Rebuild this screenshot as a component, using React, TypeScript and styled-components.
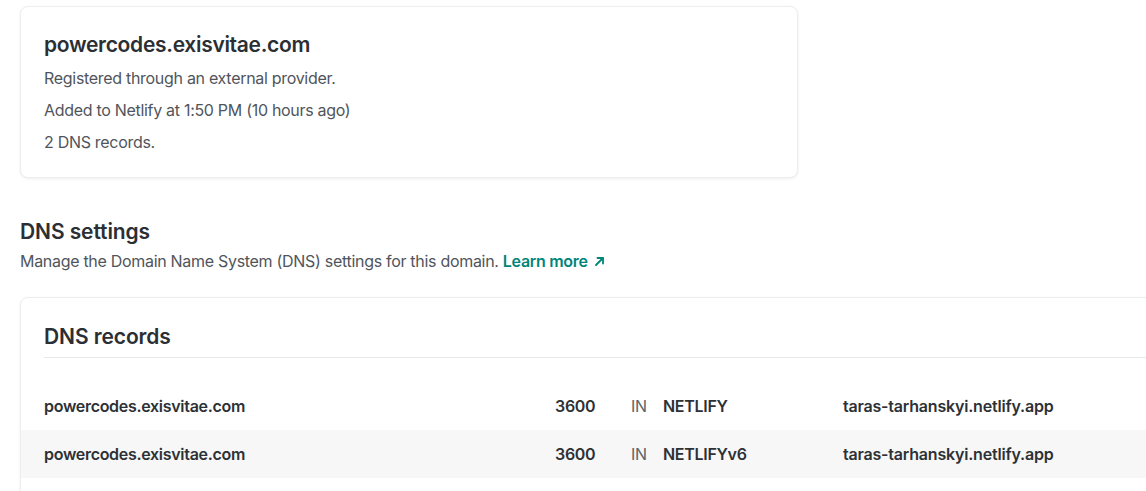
import React from "react";
import styled, { createGlobalStyle } from "styled-components";

const Global = createGlobalStyle`
  html, body { margin: 0; padding: 0; background: #ffffff; }
  body {
    font-family: Inter, "Noto Sans", "Liberation Sans", sans-serif;
    color: #50555b;
    overflow: hidden;
    letter-spacing: -0.3px;
    -webkit-font-smoothing: antialiased;
  }
`;

const Page = styled.div`
  width: 1146px;
  height: 491px;
  overflow: hidden;
  box-sizing: border-box;
  padding: 6px 0 0 20px;
`;

const Card = styled.section<{ $width: number }>`
  box-sizing: border-box;
  width: ${(p) => p.$width}px;
  background: #fff;
  border: 1px solid #eceef0;
  border-radius: 8px;
  box-shadow: 0 1px 3px rgba(0, 0, 0, 0.07);
`;

const InfoCard = styled(Card)`
  padding: 24px 23px 23px;
`;

const Heading = styled.h2`
  margin: 0;
  font-size: 21px;
  line-height: 28px;
  font-weight: 600;
  color: #2b2f34;
  letter-spacing: -0.1px;
`;

const Title = styled(Heading)`
  letter-spacing: -0.3px;
  margin-bottom: -1px;
`;

const InfoLine = styled.p`
  margin: 8px 0 0;
  font-size: 16px;
  line-height: 24px;
  color: #50555b;
`;

const Section = styled.div`
  margin-top: 40px;
`;

const SectionDesc = styled.p`
  margin: 3px 0 0;
  font-size: 16px;
  line-height: 24px;
  color: #50555b;
`;

const LearnMore = styled.a`
  color: #00857a;
  font-weight: 600;
  text-decoration: none;
  display: inline-flex;
  align-items: center;
  gap: 6px;
`;

const RecordsCard = styled(Card)`
  margin-top: 24px;
  padding: 25px 0 0;
  height: 220px;
`;

const RecordsHeader = styled.div`
  margin: 0 0 0 23px;
  padding-bottom: 6px;
  border-bottom: 1px solid #e6e8ea;
`;

const RecordList = styled.div`
  margin-top: 24px;
`;

const Row = styled.div<{ $shaded?: boolean }>`
  display: grid;
  grid-template-columns: 511px 76px 32px 180px 1fr;
  align-items: center;
  height: 48px;
  padding-left: 23px;
  background: ${(p) => (p.$shaded ? "#f7f7f7" : "transparent")};
  font-size: 16px;
  color: #2d3136;
`;

const Cell = styled.span<{ $weight?: number; $muted?: boolean; $tight?: boolean }>`
  font-weight: ${(p) => p.$weight ?? 600};
  color: ${(p) => (p.$muted ? "#5d6268" : "#2d3136")};
  letter-spacing: ${(p) => (p.$tight ? "-0.3px" : "-0.2px")};
  white-space: nowrap;
`;

const ArrowIcon = () => (
  <svg width="11" height="11" viewBox="0 0 11 11" fill="none" stroke="currentColor" strokeWidth="1.8" strokeLinecap="round" strokeLinejoin="round">
    <path d="M2 9L9 2" />
    <path d="M3.5 2H9V7.5" />
  </svg>
);

const records = [
  { name: "powercodes.exisvitae.com", ttl: "3600", cls: "IN", type: "NETLIFY", value: "taras-tarhanskyi.netlify.app" },
  { name: "powercodes.exisvitae.com", ttl: "3600", cls: "IN", type: "NETLIFYv6", value: "taras-tarhanskyi.netlify.app" },
];

export default function App() {
  return (
    <>
      <Global />
      <Page>
        <InfoCard $width={778}>
          <Title>powercodes.exisvitae.com</Title>
          <InfoLine>Registered through an external provider.</InfoLine>
          <InfoLine>Added to Netlify at 1:50 PM (10 hours ago)</InfoLine>
          <InfoLine>2 DNS records.</InfoLine>
        </InfoCard>

        <Section>
          <Heading>DNS settings</Heading>
          <SectionDesc>
            Manage the Domain Name System (DNS) settings for this domain.{" "}
            <LearnMore href="#">
              Learn more <ArrowIcon />
            </LearnMore>
          </SectionDesc>
        </Section>

        <RecordsCard $width={1200}>
          <RecordsHeader>
            <Heading>DNS records</Heading>
          </RecordsHeader>
          <RecordList>
            {records.map((r, i) => (
              <Row key={i} $shaded={i % 2 === 1}>
                <Cell $tight>{r.name}</Cell>
                <Cell $tight>{r.ttl}</Cell>
                <Cell $weight={400} $muted>{r.cls}</Cell>
                <Cell $tight>{r.type}</Cell>
                <Cell>{r.value}</Cell>
              </Row>
            ))}
          </RecordList>
        </RecordsCard>
      </Page>
    </>
  );
}
